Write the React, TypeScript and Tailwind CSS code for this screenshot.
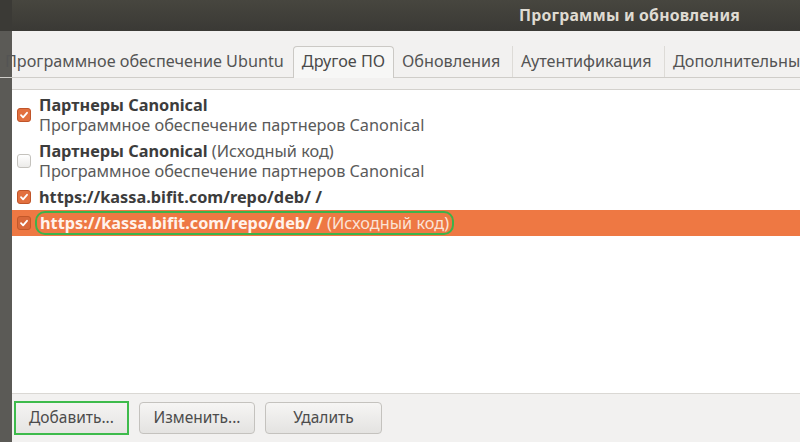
import React from "react";

const font = { fontFamily: '"Noto Sans", "DejaVu Sans", sans-serif' };

function Check({ checked, selected }: { checked: boolean; selected?: boolean }) {
  if (!checked) {
    return (
      <span className="w-[14px] h-[14px] rounded-[3px] border border-[#c4c2bd] bg-gradient-to-b from-[#ffffff] to-[#ecebe9] shrink-0" />
    );
  }
  return (
    <span
      className={`w-[14px] h-[14px] rounded-[3px] border flex items-center justify-center shrink-0 ${
        selected ? "border-[#c2582a] bg-[#d9683a]" : "border-[#c0552a] bg-[#e2703f]"
      }`}
    >
      <svg width="10" height="10" viewBox="0 0 10 10">
        <path d="M2 5.2 L4.1 7.3 L8 2.8" fill="none" stroke="#fff" strokeWidth="1.8" strokeLinecap="round" strokeLinejoin="round" />
      </svg>
    </span>
  );
}

const tabs = [
  { label: "Программное обеспечение Ubuntu", w: "w-[293px]", active: false },
  { label: "Другое ПО", w: "w-[101px]", active: true },
  { label: "Обновления", w: "w-[118px]", active: false },
  { label: "Аутентификация", w: "w-[152px]", active: false },
  { label: "Дополнительные", w: "w-[160px]", active: false },
];

export default function App() {
  return (
    <div className="w-[800px] h-[442px] flex overflow-hidden bg-[#f2f1f0] text-[#4c4c4c]" style={font}>
      {/* left edge of the desktop behind */}
      <div className="w-[12px] flex flex-col shrink-0 relative z-0">
        <div className="h-[31px] bg-[#3b3a36]" />
        <div className="flex-1 bg-[#5b5a56]" />
      </div>

      <div className="flex-1 flex flex-col min-w-0">
        {/* title bar */}
        <div className="h-[31px] bg-gradient-to-b from-[#47463f] to-[#3a3935] flex items-center justify-end pr-[60px] shrink-0">
          <span className="text-[15.8px] font-bold text-[#dfdbd2] tracking-[0.2px]">Программы и обновления</span>
        </div>

        {/* tabs */}
        <div className="h-[47px] flex items-end border-b border-[#cfcdc9] -ml-[12px] shrink-0 relative z-10">
          {tabs.map((t, i) =>
            t.active ? (
              <div
                key={t.label}
                className={`${t.w} h-[32px] flex items-center justify-center rounded-t-[4px] border border-b-0 border-[#cbc9c5] bg-[#f7f7f6] text-[16.2px] text-[#4a4a4a] shrink-0 -mb-px pb-[2px]`}
              >
                {t.label}
              </div>
            ) : (
              <div
                key={t.label}
                className={`${t.w} h-[31px] flex items-center ${i === 0 ? "justify-start pl-[5px]" : "justify-start pl-[8px]"} ${
                  i > 2 ? "border-l border-[#dddbd7]" : ""
                } text-[16.2px] text-[#545454] shrink-0 whitespace-nowrap overflow-hidden`}
              >
                {t.label}
              </div>
            )
          )}
        </div>

        <div className="h-[12px] shrink-0 border-b border-[#d3d1cd]" />

        {/* source list */}
        <div className="flex-1 bg-white pt-[2px] border-b border-[#dad8d4] text-[16.3px] leading-[20px]">
          <div className="flex items-center gap-[8px] pl-[5px] h-[46px]">
            <Check checked />
            <div>
              <div className="font-bold text-[#3c3c3c]">Партнеры Canonical</div>
              <div className="text-[#5a5a5a]">Программное обеспечение партнеров Canonical</div>
            </div>
          </div>
          <div className="flex items-center gap-[8px] pl-[5px] h-[46px]">
            <Check checked={false} />
            <div>
              <div className="text-[#5a5a5a]">
                <span className="font-bold text-[#3c3c3c]">Партнеры Canonical</span> (Исходный код)
              </div>
              <div className="text-[#5a5a5a]">Программное обеспечение партнеров Canonical</div>
            </div>
          </div>
          <div className="flex items-center gap-[8px] pl-[5px] h-[26px]">
            <Check checked />
            <div className="font-bold text-[#3c3c3c]">https://kassa.bifit.com/repo/deb/ /</div>
          </div>
          <div className="flex items-center gap-[4px] pl-[5px] h-[26px] bg-[#ee7843]">
            <Check checked selected />
            <div className="h-[24px] flex items-center px-[3px] border-2 border-[#3db24a] rounded-[10px] text-[#fbe3d6]">
              <span className="font-bold text-[#fff3ec]">https://kassa.bifit.com/repo/deb/ /</span>
              <span>&nbsp;(Исходный код)</span>
            </div>
          </div>
        </div>

        {/* buttons */}
        <div className="h-[48px] flex items-center gap-[10px] pl-[2px] shrink-0">
          <div className="w-[115px] h-[34px] border-2 border-[#3ebb4c] flex items-center justify-center bg-gradient-to-b from-[#f4f3f2] to-[#e6e5e3] text-[15.5px] text-[#4c4c4c]">
            Добавить...
          </div>
          <div className="w-[116px] h-[32px] rounded-[4px] border border-[#c4c2be] flex items-center justify-center bg-gradient-to-b from-[#f6f5f4] to-[#e4e3e1] text-[15.5px] text-[#4c4c4c]">
            Изменить...
          </div>
          <div className="w-[117px] h-[32px] rounded-[4px] border border-[#c4c2be] flex items-center justify-center bg-gradient-to-b from-[#f6f5f4] to-[#e4e3e1] text-[15.5px] text-[#4c4c4c]">
            Удалить
          </div>
        </div>
      </div>
    </div>
  );
}
